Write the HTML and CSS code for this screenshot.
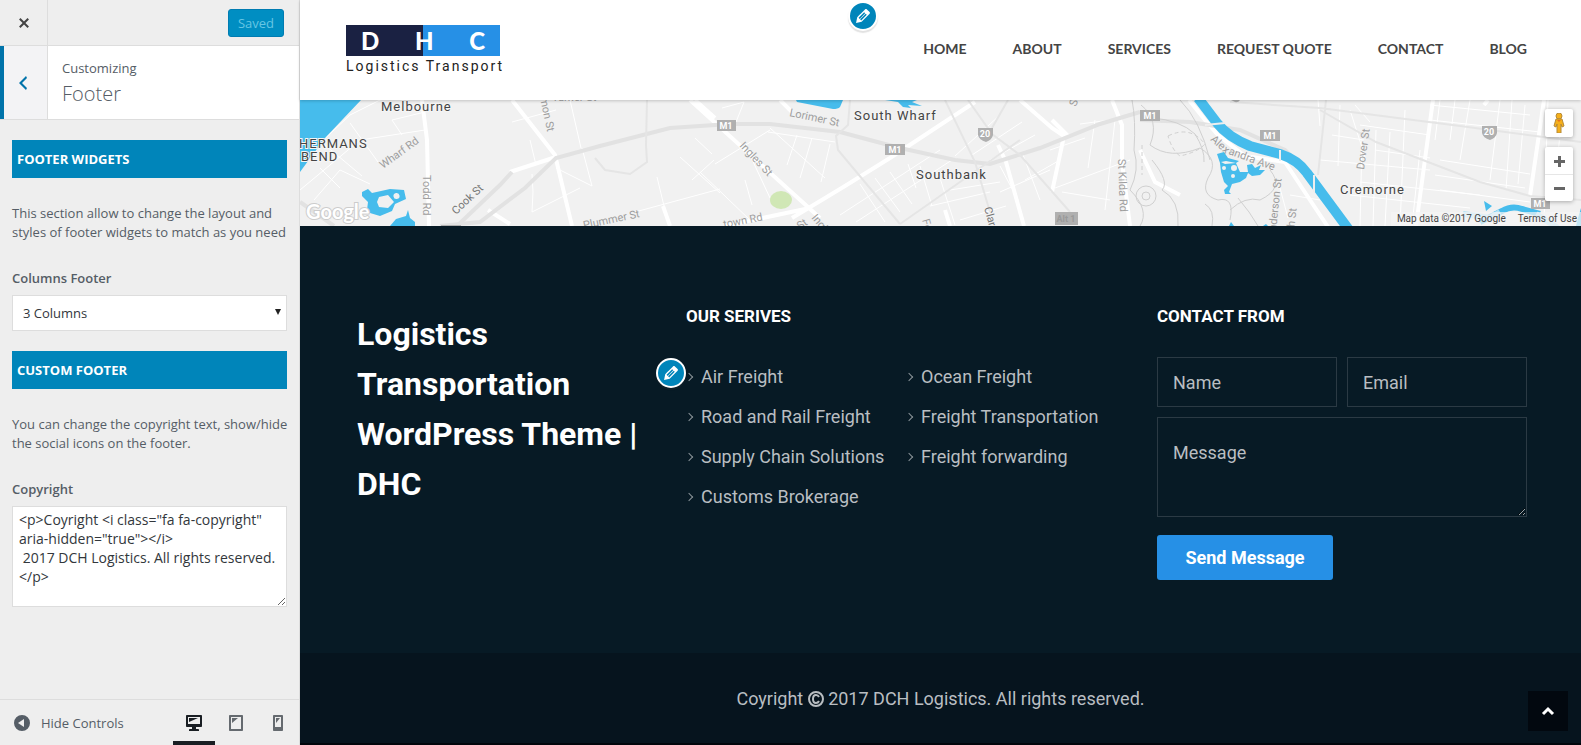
FILE: index.html
```
<!DOCTYPE html>
<html lang="en">
<head>
    <meta charset="UTF-8">
    <title>Customize: Footer</title>
    <link rel="stylesheet" href="styles.css">
</head>
<body>

<div class="customizer">

    <!-- Controls -->
    <form class="sidebar">
        <div class="sidebar-top">
            <button type="button" class="close-button" aria-label="Close">
                <svg class="icon" viewBox="0 0 20 20"><path d="M14.95 6.46L11.41 10l3.54 3.54-1.41 1.41L10 11.42l-3.53 3.53-1.42-1.42L8.58 10 5.05 6.47l1.42-1.42L10 8.58l3.54-3.53z"/></svg>
            </button>
            <button type="button" class="save-button">Saved</button>
        </div>
        <div class="section-title">
            <button type="button" class="back-button" aria-label="Back">
                <svg class="icon" viewBox="0 0 20 20"><path d="M14 5l-5 5 5 5-1 2-7-7 7-7z"/></svg>
            </button>
            <h1 class="section-name"><span class="section-small">Customizing</span>Footer</h1>
        </div>

        <div class="controls">
            <h2 class="control-heading">FOOTER WIDGETS</h2>
            <p class="control-text">This section allow to change the layout and styles of footer widgets to match as you need</p>
            <label class="control-label" for="columns">Columns Footer</label>
            <div class="select-wrap">
                <select id="columns" class="control-select">
                    <option>1 Columns</option>
                    <option>2 Columns</option>
                    <option selected>3 Columns</option>
                    <option>4 Columns</option>
                </select>
                <svg class="select-arrow" viewBox="0 0 6 6"><path d="M0 0h6L3 6z"/></svg>
            </div>
            <h2 class="control-heading">CUSTOM FOOTER</h2>
            <p class="control-text">You can change the copyright text, show/hide the social icons on the footer.</p>
            <label class="control-label" for="copyright">Copyright</label>
            <textarea id="copyright" class="control-textarea" spellcheck="false">&lt;p&gt;Coyright &lt;i class="fa fa-copyright" aria-hidden="true"&gt;&lt;/i&gt;
 2017 DCH Logistics. All rights reserved.&lt;/p&gt;</textarea>
        </div>

        <div class="sidebar-bottom">
            <button type="button" class="collapse-button">
                <svg class="icon" viewBox="0 0 20 20"><path fill-rule="evenodd" d="M10 2a8 8 0 1 1 0 16 8 8 0 0 1 0-16zm2 4l-6 4 6 4z"/></svg>
                Hide Controls
            </button>
            <div class="devices">
                <button type="button" class="device active" aria-label="Desktop">
                    <svg class="icon" viewBox="0 0 20 20"><path d="M3 2h14c.55 0 1 .45 1 1v10c0 .55-.45 1-1 1h-5v2h2c.55 0 1 .45 1 1v1H5v-1c0-.55.45-1 1-1h2v-2H3c-.55 0-1-.45-1-1V3c0-.55.45-1 1-1zm13 9V4H4v7h12zM5 5h9L5 9V5z"/></svg>
                </button>
                <button type="button" class="device" aria-label="Tablet">
                    <svg class="icon" viewBox="0 0 20 20"><path d="M4 2h12c.55 0 1 .45 1 1v14c0 .55-.45 1-1 1H4c-.55 0-1-.45-1-1V3c0-.55.45-1 1-1zm11 14V4H5v12h10zM6 5h6l-6 5V5z"/></svg>
                </button>
                <button type="button" class="device" aria-label="Phone">
                    <svg class="icon" viewBox="0 0 20 20"><path d="M6 2h8c.55 0 1 .45 1 1v14c0 .55-.45 1-1 1H6c-.55 0-1-.45-1-1V3c0-.55.45-1 1-1zm7 12V4H7v10h6zM8 5h4l-4 5V5z"/></svg>
                </button>
            </div>
        </div>
    </form>

    <!-- Site preview -->
    <div class="preview">
        <header class="site-header">
            <a href="#" class="logo">
                <span class="logo-box"><span>D</span><span>H</span><span>C</span></span>
                <span class="logo-tagline">Logistics Transport</span>
            </a>
            <nav class="menu">
                <a href="#">HOME</a>
                <a href="#">ABOUT</a>
                <a href="#">SERVICES</a>
                <a href="#">REQUEST QUOTE</a>
                <a href="#">CONTACT</a>
                <a href="#">BLOG</a>
            </nav>
            <button type="button" class="edit-button edit-menu" aria-label="Edit menu">
                <svg viewBox="0 0 20 20"><path d="M13.89 3.39l2.71 2.72c.46.46.42 1.24.03 1.64l-8.01 8.02-5.56 1.16 1.16-5.58s7.6-7.63 7.99-8.03c.39-.39 1.22-.39 1.68.07zm-2.73 2.79l-5.59 5.61 1.11 1.11 5.54-5.65zm-2.97 8.23l5.58-5.6-1.07-1.08-5.59 5.6z"/></svg>
            </button>
        </header>

        <div class="map">
            <svg class="map-canvas" viewBox="0 0 1281 126" preserveAspectRatio="xMidYMid slice">
                <!-- minor roads -->
                <g class="road-thin">
                    <path d="M0 62L50 15 100 -10M50 23L78 62M20 68L40 88M92 20L125 12M92 20L102 35M14 100L40 70 70 84M25 45L62 76M0 90L60 40 125 30"/>
                    <path d="M212 22L256 10M230 40L236 65M270 0L281 48M232 74L233 92 232 112 280 88M256 68L292 86M282 48L292 86M380 57L420 93M392 80L414 60M395 38L412 54M357 77L364 106M335 112L420 89"/>
                    <path d="M400 72L452 122M415 64L470 30M445 80L452 105M450 55L470 98M470 28L525 78M468 32L535 42M497 35L487 65M512 38L500 78M530 44L521 82M422 8L444 2M436 22L444 2"/>
                    <path d="M540 115L640 50M556 122L652 60M560 84L585 122M575 78L600 112M590 72L612 104M608 64L616 88M620 66L632 106M640 78L655 125M650 90L700 82M630 106L690 92M660 120L706 106M690 60L735 35M672 55L722 22M655 56L700 15M700 66L718 100M722 52L740 100M700 92L750 70M725 80L760 60M755 88L830 60M780 24L810 20M795 20L788 68M762 92L810 100M815 20L805 110M750 50L785 38"/>
                    <path d="M980 88L988 118M990 95L1020 100M1018 0L1020 26M1040 5L1038 66M1050 10L1066 60M1055 5L1070 22M1062 40L1060 126M1076 30L1073 126M1090 32L1085 126M1105 10L1100 126M1120 50L1112 126M1140 0L1135 40M1155 0L1150 40M1170 0L1160 60M1200 0L1190 80M1212 0L1206 90M1225 5L1218 84M1032 35L1064 40M1020 60L1130 70M1060 25L1130 35M1075 50L1130 58M1060 82L1180 95M1050 95L1170 108M1130 20L1240 32M1140 60L1230 74M1135 75L1225 88M1140 90L1230 102M1130 5L1230 15M1248 0L1244 120M1262 10L1255 90"/>
                </g>
                <g class="road-thick">
                    <path d="M122 0L127 40 129 126M212 0L255 55 272 126M210 72L256 57M395 0L415 18M390 0L520 118"/>
                    <path d="M492 118L545 86 590 58M425 126L510 108M480 0L492 12M590 58L675 2M720 0L752 28 764 36 752 92M812 0L822 25 822 62 830 126M698 45L706 62 724 126M752 20L768 36M363 106L370 126M645 110L650 126M188 110L210 124"/>
                    <path d="M1133 0L1116 126M1188 0L1184 5M1244 0L1230 96"/>
                    <path d="M889 0L905 20 918 35 945 56 985 62 1010 100 1030 130M840 50L855 82 880 95"/>
                </g>
                <!-- rail and freeways -->
                <g class="road-grey">
                    <path d="M140 126L180 122 225 88 256 58 300 46 370 28 430 24 470 24 540 32 600 48 655 60 690 64 740 48 800 24 840 12"/>
                    <path d="M840 20L890 22 940 30 985 50 1010 75"/>
                    <path d="M0 102L20 116 34 126M157 126L200 85 212 72"/>
                </g>
                <g class="road-grey-thin">
                    <path d="M347 0L346 45 347 62 330 74 305 70 295 58M550 0L548 25 536 36 538 50 600 124M645 0L675 62 690 112M668 0L692 34 720 55 770 112M708 0L692 28M600 124L720 40M930 2L1020 8 1160 26 1281 42M1020 10L1076 42 1180 82 1230 96 1281 100M1026 0L1018 75"/>
                </g>
                <!-- park paths -->
                <g class="park-path">
                    <path d="M832 0Q836 20 834 50Q840 70 830 90Q850 110 840 126M841 5Q860 20 850 45Q870 60 900 48Q920 60 908 78Q900 95 918 100Q935 96 930 120M880 0Q900 20 910 60M852 18Q880 20 895 34Q905 50 904 62M852 60Q870 82 862 90Q880 100 878 126M930 110Q945 96 960 100Q985 88 970 70M905 104Q915 110 912 126M938 98Q950 112 958 126"/>
                    <circle cx="846" cy="96" r="10"/>
                    <circle cx="846" cy="96" r="4"/>
                    <path stroke-dasharray="4 3" d="M868 36Q890 25 905 44Q898 52 880 56Q872 50 868 36zM842 45V75"/>
                </g>

                <!-- water -->
                <path class="water" d="M0 0H61L25 38 0 72z"/>
                <path class="water" fill-rule="evenodd" d="M62 92L68 89 72 93 90 89 104 90 106 99 95 104 92 111 80 116 70 113 67 110 68 102 62 96zM79 97L88 95 94 102 88 108 79 107 77 102zM96 93a3 3 0 1 0 1 6 3 3 0 0 0-1-6z"/>
                <path class="water" d="M90 126L96 119 106 116 108 110 110 118 115 122V126z"/>
                <path class="water" d="M496 0H543L540 7Q538 9 533 9L497 2z"/>
                <path class="water" d="M585 0H617L612 2 622 6 608 5 611 8 603 7 598 2z"/>
                <path class="river" d="M898 -2L917 23Q928 37 950 46L980 54Q998 60 1007 73L1055 138"/>
                <path class="water" fill-rule="evenodd" d="M917 54L924 52 928 58 939 61 936 63 926 61 921 62 925 64 936 63 940 72 948 72 947 65 952 64 955 68 961 65 959 70 965 70 960 75 952 76 948 73 946 78 940 82 932 84 929 92 931 94 925 94 924 90 928 86 924 82 921 72 920 63zM922 68a2 2 0 1 0 4 0 2 2 0 0 0-4 0zM931 68a3 3 0 1 0 6 0 3 3 0 0 0-6 0zM931 76a2 2 0 1 0 4 0 2 2 0 0 0-4 0z"/>
                <path class="water" d="M929 126L931 122 934 126zM963 126L966 124 968 126z"/>
                <path class="river river-small" d="M1180 122L1202 111Q1212 105 1222 109L1240 114"/>
                <path class="river-pale" d="M1163 114L1190 118 1200 112M1236 114L1258 128"/>
                <path class="water" d="M1184 101L1192 106 1186 111zM1278 118L1281 108V126H1276z"/>
                <path class="bridge" d="M905 25L925 23M980 50V61M1014 75V92"/>
                <ellipse class="park" cx="481" cy="100" rx="11" ry="9"/>

                <!-- labels -->
                <g class="street">
                    <text transform="translate(83 69) rotate(-36)">Wharf Rd</text>
                    <text transform="translate(123 75) rotate(90)">Todd Rd</text>
                    <text class="street-dark" transform="translate(156 115) rotate(-43)">Cook St</text>
                    <text transform="translate(240 -2) rotate(78)">mon St</text>
                    <text x="252" y="1">Turner St</text>
                    <text transform="translate(284 129) rotate(-12)">Plummer St</text>
                    <text transform="translate(489 16) rotate(12)">Lorimer St</text>
                    <text transform="translate(439 46) rotate(47)">Ingles St</text>
                    <text transform="translate(424 128) rotate(-11)">town Rd</text>
                    <text transform="translate(511 118) rotate(50)">Ingles</text>
                    <text transform="translate(500 130) rotate(-35)">St</text>
                    <text transform="translate(622 120) rotate(75)">Fe</text>
                    <text class="street-dark" transform="translate(684 108) rotate(74)">Clarendon</text>
                    <text transform="translate(776 7) rotate(-70)">St</text>
                    <text transform="translate(818 59) rotate(88)">St Kilda Rd</text>
                    <text transform="translate(910 40) rotate(42)">Alex</text>
                    <text transform="translate(928 54) rotate(20)">andra Ave</text>
                    <text transform="translate(976 131) rotate(-84)">nderson St</text>
                    <text transform="translate(994 133) rotate(-84)">sh St</text>
                    <text transform="translate(1064 70) rotate(-82)">Dover St</text>
                </g>
                <g class="place">
                    <text x="81" y="11">Melbourne</text>
                    <text x="-1" y="48">HERMANS</text>
                    <text x="1" y="61">BEND</text>
                    <text x="554" y="20">South Wharf</text>
                    <text x="616" y="79">Southbank</text>
                    <text x="1040" y="94">Cremorne</text>
                </g>
                <g class="shield">
                    <path d="M417 20h19v11h-19zM585 44h20v11h-20zM840 10h20v11h-20zM960 30h20v11h-20zM1231 98h19v11h-19zM755 112h23v13h-23zM141 125h20v1h-20z"/>
                    <path d="M678 28h15v7q-1 5-7 7q-7-2-8-7zM1182 26h15v7q-1 5-7 7q-7-2-8-7zM931 0h9q-2 3-5 2z"/>
                </g>
                <g class="shield-text">
                    <text x="426" y="29">M1</text>
                    <text x="595" y="53">M1</text>
                    <text x="850" y="19">M1</text>
                    <text x="970" y="39">M1</text>
                    <text x="1240" y="107">M1</text>
                    <text x="685" y="37">20</text>
                    <text x="1189" y="35">20</text>
                    <text class="shield-faint" x="766" y="122">Alt 1</text>
                </g>
                <text class="google" x="6" y="119">Google</text>
            </svg>
            <div class="map-controls">
                <button type="button" class="map-button pegman" aria-label="Street view">
                    <svg viewBox="0 0 12 20"><circle cx="6" cy="3" r="3"/><path d="M3 6h6l2 7-2 1-1-3v9H4v-9l-1 3-2-1z"/><path class="pegman-shade" d="M4 7h4L6 9z"/></svg>
                </button>
                <div class="zoom">
                    <button type="button" class="map-button" aria-label="Zoom in">
                        <svg viewBox="0 0 12 12"><path d="M5 1h3v4h4v3H8v4H5V8H1V5h4z"/></svg>
                    </button>
                    <button type="button" class="map-button" aria-label="Zoom out">
                        <svg viewBox="0 0 12 12"><path d="M1 5h11v3H1z"/></svg>
                    </button>
                </div>
            </div>
            <div class="map-terms"><span>Map data ©2017 Google</span><a href="#">Terms of Use</a></div>
        </div>

        <footer class="site-footer">
            <div class="footer-main">
                <h2 class="footer-title">Logistics Transportation WordPress Theme | DHC</h2>

                <section class="services">
                    <h3 class="widget-title">OUR SERIVES</h3>
                    <ul class="service-list">
                        <li><a href="#">Air Freight</a></li>
                        <li><a href="#">Ocean Freight</a></li>
                        <li><a href="#">Road and Rail Freight</a></li>
                        <li><a href="#">Freight Transportation</a></li>
                        <li><a href="#">Supply Chain Solutions</a></li>
                        <li><a href="#">Freight forwarding</a></li>
                        <li><a href="#">Customs Brokerage</a></li>
                    </ul>
                    <button type="button" class="edit-button edit-services" aria-label="Edit widget">
                        <svg viewBox="0 0 20 20"><path d="M13.89 3.39l2.71 2.72c.46.46.42 1.24.03 1.64l-8.01 8.02-5.56 1.16 1.16-5.58s7.6-7.63 7.99-8.03c.39-.39 1.22-.39 1.68.07zm-2.73 2.79l-5.59 5.61 1.11 1.11 5.54-5.65zm-2.97 8.23l5.58-5.6-1.07-1.08-5.59 5.6z"/></svg>
                    </button>
                </section>

                <section>
                    <h3 class="widget-title">CONTACT FROM</h3>
                    <form class="contact-form">
                        <input type="text" class="field" placeholder="Name" aria-label="Name">
                        <input type="email" class="field" placeholder="Email" aria-label="Email">
                        <textarea class="field field-message" placeholder="Message" aria-label="Message"></textarea>
                        <button type="button" class="send-button">Send Message</button>
                    </form>
                </section>
            </div>
            <div class="footer-bottom">
                <p class="copyright">Coyright
                    <svg class="copyright-icon" viewBox="0 0 16 16"><circle cx="8" cy="8" r="7"/><path d="M11 6Q10 4 8 4Q5 4 5 8Q5 12 8 12Q10 12 11 10"/></svg>
                    2017 DCH Logistics. All rights reserved.</p>
                <a href="#" class="scroll-top" aria-label="Back to top">
                    <svg viewBox="0 0 14 10"><path d="M2 8l5-5 5 5"/></svg>
                </a>
            </div>
        </footer>
    </div>
</div>

</body>
</html>
```
FILE: styles.css
```
* {
    box-sizing: border-box;
}
body {
    margin: 0;
    font-family: "Open Sans", "Noto Sans", sans-serif;
    font-size: 13px;
    color: #555d66;
}
h1, h2, h3, p, ul {
    margin: 0;
    padding: 0;
}
button {
    font: inherit;
    padding: 0;
    border: none;
    background: none;
    cursor: pointer;
}
a {
    color: inherit;
    text-decoration: none;
}
.icon {
    width: 20px;
    height: 20px;
    fill: currentColor;
    flex: none;
}
.customizer {
    display: flex;
    min-height: 100vh;
}

/* Sidebar */
.sidebar {
    flex: 0 0 300px;
    display: flex;
    flex-direction: column;
    background: #eee;
    border-right: 1px solid #ddd;
}
.sidebar-top {
    display: flex;
    justify-content: space-between;
    align-items: center;
    height: 46px;
    padding-right: 15px;
    border-bottom: 1px solid #ddd;
}
.close-button {
    display: flex;
    align-items: center;
    justify-content: center;
    width: 48px;
    height: 45px;
    color: #444;
    border-right: 1px solid #ddd;
}
.save-button {
    width: 56px;
    height: 28px;
    color: #66c6e4;
    background: #008ec2;
    border: 1px solid #007cb2;
    border-radius: 3px;
}
.section-title {
    display: flex;
    height: 74px;
    background: #fff;
    border-bottom: 1px solid #ddd;
}
.back-button {
    display: flex;
    align-items: center;
    justify-content: center;
    width: 48px;
    padding-right: 5px;
    color: #0073aa;
    background: #f3f3f5;
    border-left: 4px solid #0073aa;
    border-right: 1px solid #ddd;
}
.section-name {
    padding: 12px 14px;
    font-size: 20px;
    font-weight: 300;
    line-height: 32px;
}
.section-small {
    display: block;
    font-size: 13px;
    font-weight: 400;
    line-height: 20px;
}
.controls {
    flex: 1;
    padding: 20px 12px;
}
.control-heading {
    padding: 0 5px;
    font-size: 13px;
    font-weight: 700;
    line-height: 38px;
    color: #fff;
    background: #0085ba;
}
.control-text {
    margin-right: -6px;
    padding: 26px 0;
    line-height: 19px;
}
.control-label {
    display: block;
    font-weight: 600;
    line-height: 20px;
    margin-bottom: 7px;
}
.select-wrap {
    position: relative;
    margin-bottom: 20px;
}
.control-select {
    display: block;
    width: 100%;
    height: 36px;
    padding: 0 10px;
    font: inherit;
    color: #32373c;
    background: #fff;
    border: 1px solid #ddd;
    border-radius: 0;
    appearance: none;
}
.select-arrow {
    position: absolute;
    right: 6px;
    top: 14px;
    width: 6px;
    height: 6px;
    fill: #222;
}
.control-textarea {
    display: block;
    width: 100%;
    height: 101px;
    padding: 3px 6px;
    font: inherit;
    font-size: 14px;
    line-height: 19px;
    color: #32373c;
    background: #fff;
    border: 1px solid #ddd;
}
.sidebar-bottom {
    display: flex;
    justify-content: space-between;
    height: 46px;
    padding-left: 12px;
    border-top: 1px solid #ddd;
}
.collapse-button {
    display: flex;
    align-items: center;
    gap: 9px;
    color: #555d66;
}
.devices {
    display: flex;
}
.device {
    display: flex;
    align-items: center;
    justify-content: center;
    width: 42px;
    color: #656a6f;
    border-top: 4px solid transparent;
    border-bottom: 4px solid transparent;
}
.device.active {
    color: #191e23;
    border-bottom-color: #191e23;
}

/* Preview */
.preview {
    flex: 1;
    min-width: 0;
    display: flex;
    flex-direction: column;
    font-family: Roboto, sans-serif;
}
.site-header {
    position: relative;
    z-index: 1;
    display: flex;
    align-items: center;
    justify-content: space-between;
    height: 100px;
    padding: 0 54px 0 46px;
    background: #fff;
    box-shadow: 0 1px 3px rgba(0, 0, 0, 0.2);
}
.logo {
    display: flex;
    flex-direction: column;
    width: 154px;
}
.logo-box {
    display: flex;
    justify-content: space-between;
    padding: 0 15px;
    font-family: Lato, sans-serif;
    font-size: 24px;
    font-weight: 900;
    line-height: 31px;
    color: #fff;
    background: linear-gradient(90deg, #1a2142 50%, #2690e6 50%);
}
.logo-tagline {
    font-size: 14px;
    line-height: 20px;
    letter-spacing: 2px;
    white-space: nowrap;
    color: #222;
}
.menu {
    display: flex;
    gap: 46px;
    padding-bottom: 3px;
    font-family: Lato, sans-serif;
    font-size: 14px;
    font-weight: 700;
    color: #444;
}
.edit-button {
    position: absolute;
    display: flex;
    align-items: center;
    justify-content: center;
    width: 30px;
    height: 30px;
    background: #0085ba;
    border: 2px solid #fff;
    border-radius: 50%;
    box-shadow: 0 2px 1px rgba(60, 60, 60, 0.15);
}
.edit-button svg {
    flex: none;
    width: 20px;
    height: 20px;
    fill: #fff;
}
.edit-menu {
    left: 548px;
    top: 1px;
}
.edit-services {
    left: -30px;
    top: 52px;
}

/* Map */
.map {
    position: relative;
    height: 126px;
    background: #f1f1f1;
    overflow: hidden;
}
.map-canvas {
    display: block;
    width: 100%;
    height: 100%;
}
.road-thin, .road-thick, .road-grey, .road-grey-thin, .park-path {
    fill: none;
    stroke: #fff;
    stroke-width: 1;
}
.road-thick {
    stroke-width: 4;
}
.road-grey {
    stroke: #e2e2e2;
    stroke-width: 4;
}
.road-grey-thin {
    stroke: #e5e5e5;
    stroke-width: 2;
}
.park-path {
    stroke: #d0d0d0;
}
.water {
    fill: #46bcec;
}
.river {
    fill: none;
    stroke: #46bcec;
    stroke-width: 10;
}
.river-small {
    stroke-width: 6;
}
.river-pale {
    fill: none;
    stroke: #b4e2f5;
    stroke-width: 6;
}
.bridge {
    stroke: #eee;
    stroke-width: 2;
}
.park {
    fill: #d0e7b5;
}
.street {
    font-size: 11px;
    fill: #9e9e9e;
}
.street-dark {
    fill: #757575;
}
.place {
    font-size: 13px;
    letter-spacing: 1px;
    fill: #444;
    stroke: #f5f5f5;
    stroke-width: 2;
    paint-order: stroke;
}
.shield {
    fill: #b0b0b0;
}
.shield-text {
    font-size: 9px;
    font-weight: 700;
    text-anchor: middle;
    fill: #fff;
}
.shield-faint {
    fill: #9a9a9a;
}
.google {
    font-family: Lato, sans-serif;
    font-size: 20px;
    font-weight: 700;
    fill: #fff;
    stroke: #ccc;
    stroke-width: 2;
    paint-order: stroke;
}
.map-controls {
    position: absolute;
    top: 9px;
    right: 8px;
    display: flex;
    flex-direction: column;
    gap: 10px;
}
.map-button {
    display: flex;
    align-items: center;
    justify-content: center;
    width: 28px;
    height: 27px;
}
.map-button svg {
    width: 12px;
    height: 12px;
    fill: #666;
}
.pegman, .zoom {
    background: #fff;
    border-radius: 2px;
    box-shadow: 0 1px 4px rgba(0, 0, 0, 0.3);
}
.pegman {
    height: 28px;
}
.map-button.pegman svg {
    height: 20px;
    fill: #f6b01a;
    stroke: #b58a3a;
    stroke-width: 1;
}
.map-button .pegman-shade {
    fill: #e8711c;
    stroke: none;
}
.zoom .map-button + .map-button {
    border-top: 1px solid #e6e6e6;
}
.map-terms {
    position: absolute;
    right: 0;
    bottom: 0;
    display: flex;
    gap: 12px;
    padding: 0 4px 0 6px;
    font-size: 10px;
    line-height: 14px;
    color: #444;
    background: rgba(245, 245, 245, 0.7);
}

/* Footer */
.site-footer {
    flex: 1;
    display: flex;
    flex-direction: column;
    color: #b9bec2;
    background: #071a25;
}
.footer-main {
    flex: 1;
    display: grid;
    grid-template-columns: 330fr 471fr 370fr;
    align-items: start;
    padding: 80px 54px 73px 56px;
}
.footer-title {
    padding: 3px 30px 0 1px;
    font-size: 32px;
    line-height: 50px;
    color: #fff;
}
.services {
    position: relative;
    padding-right: 31px;
}
.widget-title {
    margin-bottom: 31px;
    font-size: 17px;
    line-height: 20px;
    color: #fff;
}
.service-list {
    display: grid;
    grid-template-columns: 1fr 1fr;
    list-style: none;
    font-size: 18px;
    line-height: 40px;
}
.service-list li {
    display: flex;
    align-items: center;
    gap: 9px;
    white-space: nowrap;
}
.service-list li::before {
    content: "";
    width: 5px;
    height: 5px;
    border-top: 1px solid #8b9399;
    border-right: 1px solid #8b9399;
    transform: rotate(45deg);
}
.contact-form {
    display: grid;
    grid-template-columns: 1fr 1fr;
    gap: 10px;
}
.field {
    width: 100%;
    min-width: 0;
    height: 50px;
    padding: 0 15px;
    font: inherit;
    font-size: 18px;
    color: #b9bec2;
    background: transparent;
    border: 1px solid #2b3a44;
    border-radius: 0;
}
.field::placeholder {
    color: #b9bec2;
}
.field-message {
    grid-column: span 2;
    height: 100px;
    padding-top: 24px;
}
.send-button {
    justify-self: start;
    width: 176px;
    height: 45px;
    margin-top: 8px;
    font-size: 18px;
    font-weight: 700;
    color: #fff;
    background: #2690e6;
    border-radius: 3px;
}
.footer-bottom {
    position: relative;
    height: 92px;
    background: #06141e;
    border-bottom: 2px solid #01060c;
}
.copyright {
    font-size: 18px;
    line-height: 92px;
    text-align: center;
}
.copyright-icon {
    width: 16px;
    height: 16px;
    vertical-align: -2px;
    fill: none;
    stroke: currentColor;
    stroke-width: 2;
}
.scroll-top {
    position: absolute;
    right: 13px;
    bottom: 12px;
    display: flex;
    align-items: center;
    justify-content: center;
    width: 40px;
    height: 40px;
    background: #02080f;
}
.scroll-top svg {
    width: 14px;
    height: 10px;
    fill: none;
    stroke: #fff;
    stroke-width: 3;
}
```
